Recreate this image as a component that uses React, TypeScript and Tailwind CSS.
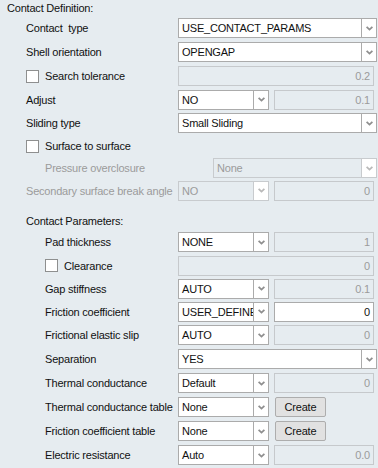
import React from "react";

const Chev = ({ c = "#8f8f8f" }: { c?: string }) => (
  <svg width="7" height="5" viewBox="0 0 7 5">
    <path d="M0.6 0.8 L3.5 3.6 L6.4 0.8" stroke={c} strokeWidth="1.8" fill="none" />
  </svg>
);

type ComboProps = { value: string; w: number; disabled?: boolean };

const Combo = ({ value, w, disabled }: ComboProps) => (
  <div className="flex h-[20px]" style={{ width: w }}>
    <div
      className={
        "flex-1 min-w-0 flex items-center px-[3px] overflow-hidden whitespace-nowrap border " +
        (disabled
          ? "bg-[#e6ecf0] border-[#c8cbce] text-[#9b9b9b]"
          : "bg-white border-[#ababab] text-[#111]")
      }
    >
      {value}
    </div>
    <div
      className={
        "w-[15px] shrink-0 flex items-center justify-center border border-l-0 bg-white " +
        (disabled ? "border-[#c8cbce]" : "border-[#ababab]")
      }
    >
      <Chev c={disabled ? "#b9b9b9" : "#8f8f8f"} />
    </div>
  </div>
);

const Field = ({ value, w, enabled }: { value: string; w: number; enabled?: boolean }) => (
  <div
    className={
      "h-[20px] flex items-center justify-end pr-[3px] border " +
      (enabled
        ? "bg-white border-[#ababab] text-[#111]"
        : "bg-[#e6ecf0] border-[#c6c9cc] text-[#9b9b9b]")
    }
    style={{ width: w }}
  >
    {value}
  </div>
);

const Box = () => (
  <div className="w-[13px] h-[13px] bg-white border border-[#8e8f8f] shrink-0" />
);

const Row = ({
  h = 24,
  label,
  pl = 26,
  disabled,
  check,
  children,
}: {
  h?: number;
  label: string;
  pl?: number;
  disabled?: boolean;
  check?: boolean;
  children?: React.ReactNode;
}) => (
  <div className="flex items-center" style={{ height: h }}>
    <div
      className={
        "w-[178px] shrink-0 flex items-center whitespace-pre " +
        (disabled ? "text-[#9b9b9b]" : "text-[#111]")
      }
      style={{ paddingLeft: pl }}
    >
      {check && <Box />}
      {check && <span className="w-[6px]" />}
      {label}
    </div>
    <div className="flex items-center">{children}</div>
  </div>
);

const Short = ({ value, field, enabled, disabled }: { value: string; field: string; enabled?: boolean; disabled?: boolean }) => (
  <>
    <Combo value={value} w={91} disabled={disabled} />
    <div className="w-[5px]" />
    <Field value={field} w={100} enabled={enabled} />
  </>
);

const CreateBtn = ({ value }: { value: string }) => (
  <>
    <Combo value={value} w={91} />
    <div className="w-[6px]" />
    <div className="w-[51px] h-[20px] flex items-center justify-center bg-[#e1e1e1] border border-[#adadad] rounded-[2px] text-[#111]">
      Create
    </div>
  </>
);

export default function App() {
  return (
    <div className="w-[378px] h-[468px] bg-[#e6ecf0] text-[11px] tracking-[-0.2px] leading-[14px] font-['Liberation_Sans',Arial,sans-serif] overflow-hidden">
      <div className="h-[16px] flex items-center pl-[7px] text-[#111]">Contact Definition:</div>
      <Row label={"Contact  type"}>
        <Combo value="USE_CONTACT_PARAMS" w={199} />
      </Row>
      <Row label="Shell orientation">
        <Combo value="OPENGAP" w={199} />
      </Row>
      <Row label="Search tolerance" check>
        <Field value="0.2" w={196} />
      </Row>
      <Row h={23} label="Adjust">
        <Short value="NO" field="0.1" />
      </Row>
      <Row label="Sliding type">
        <Combo value="Small Sliding" w={199} />
      </Row>
      <Row h={22} label="Surface to surface" check />
      <Row h={22} label="Pressure overclosure" pl={45} disabled>
        <div className="w-[35px]" />
        <Combo value="None" w={164} disabled />
      </Row>
      <Row h={23} label="Secondary surface break angle" disabled>
        <Short value="NO" field="0" disabled />
      </Row>
      <div className="h-[28px] flex items-end pb-[2px] pl-[26px] text-[#111]">Contact Parameters:</div>
      <Row label="Pad thickness" pl={45}>
        <Short value="NONE" field="1" />
      </Row>
      <Row h={23} label="Clearance" pl={45} check>
        <Field value="0" w={196} />
      </Row>
      <Row h={23} label="Gap stiffness" pl={45}>
        <Short value="AUTO" field="0.1" />
      </Row>
      <Row h={23} label="Friction coefficient" pl={45}>
        <Short value="USER_DEFINED" field="0" enabled />
      </Row>
      <Row label="Frictional elastic slip" pl={45}>
        <Short value="AUTO" field="0" />
      </Row>
      <Row label="Separation" pl={45}>
        <Combo value="YES" w={199} />
      </Row>
      <Row label="Thermal conductance" pl={45}>
        <Short value="Default" field="0" />
      </Row>
      <Row label="Thermal conductance table" pl={45}>
        <CreateBtn value="None" />
      </Row>
      <Row label="Friction coefficient table" pl={45}>
        <CreateBtn value="None" />
      </Row>
      <Row label="Electric resistance" pl={45}>
        <Short value="Auto" field="0.0" />
      </Row>
    </div>
  );
}
